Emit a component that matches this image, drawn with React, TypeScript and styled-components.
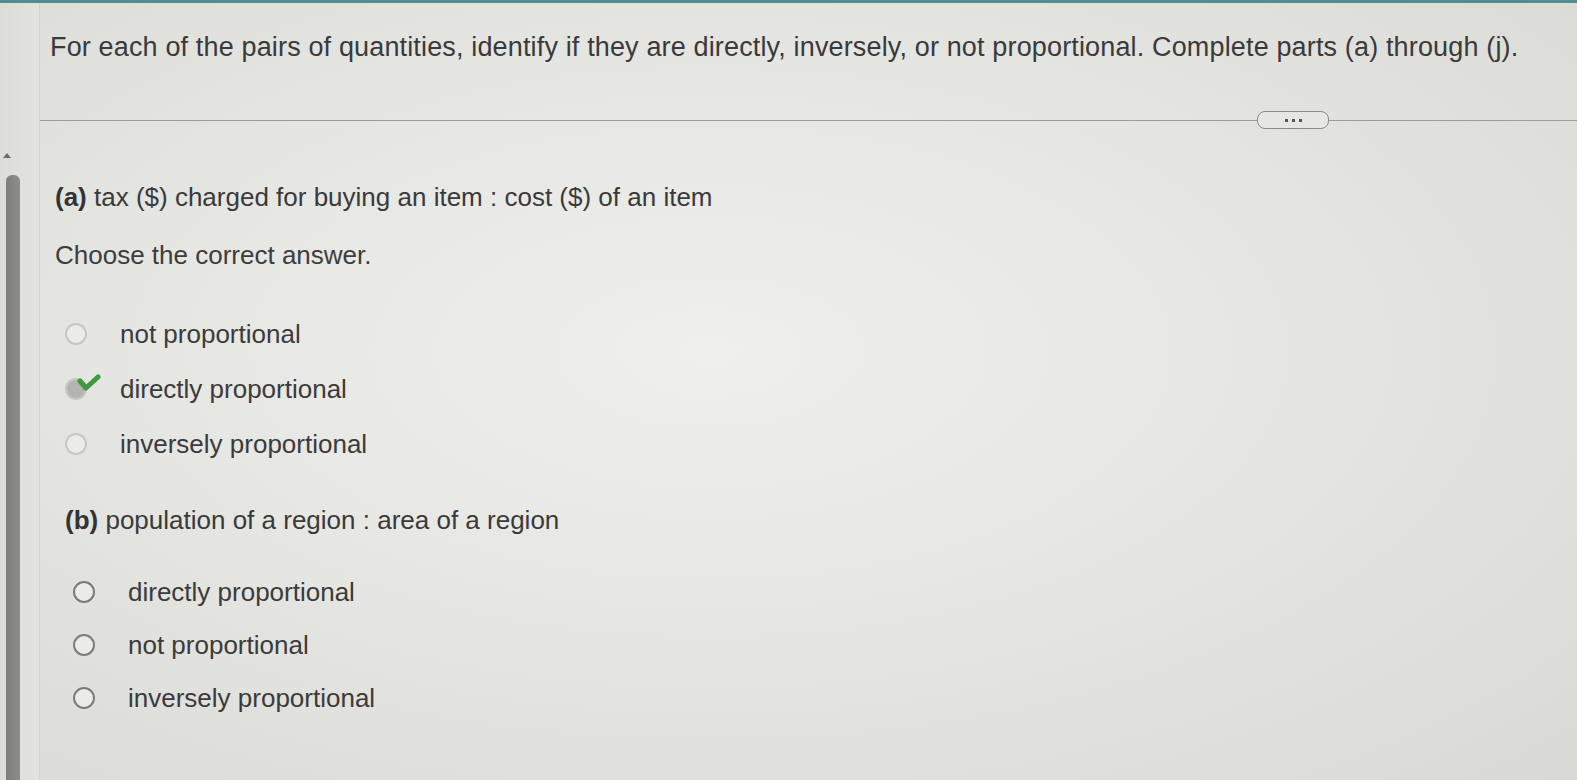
import React from 'react';
import styled, { createGlobalStyle } from 'styled-components';

const GlobalStyle = createGlobalStyle`
  html, body {
    margin: 0;
    padding: 0;
    height: 100%;
  }
  body {
    font-family: 'Liberation Sans', Arial, sans-serif;
    color: #3b3b3b;
    overflow: hidden;
  }
`;

const Page = styled.div`
  position: relative;
  display: flex;
  width: 100vw;
  height: 100vh;
  background: radial-gradient(ellipse at 45% 45%, #efefed 0%, #e6e6e3 45%, #d9d9d5 100%);
  border-top: 3px solid #4f8f93;
  box-sizing: border-box;
`;

const Gutter = styled.div`
  position: relative;
  width: 40px;
  flex-shrink: 0;
  border-right: 1px solid #d2d2cf;
  box-sizing: border-box;
  background: linear-gradient(90deg, #dcdcd8, #e2e2df);
`;

const ScrollArrow = styled.div`
  position: absolute;
  top: 150px;
  left: 3px;
  width: 0;
  height: 0;
  border-left: 4px solid transparent;
  border-right: 4px solid transparent;
  border-bottom: 5px solid #6d6d6d;
`;

const ScrollThumb = styled.div`
  position: absolute;
  top: 172px;
  bottom: 0;
  left: 6px;
  width: 14px;
  border-radius: 6px 6px 0 0;
  background: linear-gradient(90deg, #7e7e7a, #8d8d89);
`;

const Main = styled.div`
  flex: 1;
  display: flex;
  flex-direction: column;
  min-width: 0;
`;

const Heading = styled.div`
  font-size: 27px;
  padding: 28px 0 0 10px;
  line-height: 32px;
  letter-spacing: 0.15px;
  white-space: nowrap;
  color: #3a3a3a;
`;

const DividerRow = styled.div`
  display: flex;
  align-items: center;
  margin-top: 48px;
`;

const Line = styled.div<{ $grow?: boolean }>`
  height: 1px;
  background: #9c9c98;
  flex: ${({ $grow }) => ($grow ? '1' : '0 0 1217px')};
`;

const MorePill = styled.div`
  display: flex;
  align-items: center;
  justify-content: center;
  gap: 4px;
  flex: 0 0 72px;
  height: 18px;
  border: 1.5px solid #8a8a86;
  border-radius: 8px;
  box-sizing: border-box;
  background: #e6e6e3;
`;

const Dot = styled.span`
  width: 3px;
  height: 3px;
  background: #55555a;
`;

const Section = styled.div<{ $indent: number; $top: number }>`
  display: flex;
  flex-direction: column;
  padding-left: ${({ $indent }) => $indent}px;
  margin-top: ${({ $top }) => $top}px;
`;

const Prompt = styled.div`
  font-size: 26px;
  line-height: 30px;
  white-space: nowrap;
  color: #3a3a3a;
`;

const Label = styled.b`
  font-weight: bold;
  color: #333;
`;

const Instruction = styled.div`
  font-size: 26px;
  line-height: 30px;
  margin-top: 28px;
  color: #3d3d3d;
`;

const Options = styled.div<{ $top: number; $gap: number }>`
  display: flex;
  flex-direction: column;
  gap: ${({ $gap }) => $gap}px;
  margin-top: ${({ $top }) => $top}px;
`;

const Option = styled.div`
  display: flex;
  align-items: center;
  height: 30px;
  font-size: 26px;
  color: #3b3b3b;
`;

const RadioWrap = styled.div<{ $offset: number }>`
  position: relative;
  width: 22px;
  height: 22px;
  margin-left: ${({ $offset }) => $offset}px;
  flex-shrink: 0;
`;

const Radio = styled.div<{ $dark?: boolean; $checked?: boolean }>`
  width: 22px;
  height: 22px;
  border-radius: 50%;
  box-sizing: border-box;
  border: 2px solid ${({ $dark }) => ($dark ? '#7b7b7b' : '#c6c6c2')};
  background: ${({ $checked }) => ($checked ? '#b4b4b0' : '#ebebe8')};
`;

const Check = styled.svg`
  position: absolute;
  left: 12px;
  top: -4px;
  width: 24px;
  height: 20px;
`;

const OptionText = styled.span`
  margin-left: 33px;
`;

type Opt = { text: string; checked?: boolean };

const QuestionOptions: React.FC<{ items: Opt[]; dark?: boolean; top: number; gap: number; offset: number }> = ({
  items,
  dark,
  top,
  gap,
  offset,
}) => (
  <Options $top={top} $gap={gap}>
    {items.map((o) => (
      <Option key={o.text}>
        <RadioWrap $offset={offset}>
          <Radio $dark={dark} $checked={o.checked} />
          {o.checked && (
            <Check viewBox="0 0 24 20">
              <path d="M3 7 L9 14 L21 3" fill="none" stroke="#3f9a3f" strokeWidth="5" strokeLinecap="round" strokeLinejoin="round" />
            </Check>
          )}
        </RadioWrap>
        <OptionText>{o.text}</OptionText>
      </Option>
    ))}
  </Options>
);

export default function App() {
  return (
    <>
      <GlobalStyle />
      <Page>
        <Gutter>
          <ScrollArrow />
          <ScrollThumb />
        </Gutter>
        <Main>
          <Heading>
            For each of the pairs of quantities, identify if they are directly, inversely, or not proportional. Complete parts (a) through (j).
          </Heading>
          <DividerRow>
            <Line />
            <MorePill>
              <Dot />
              <Dot />
              <Dot />
            </MorePill>
            <Line $grow />
          </DividerRow>

          <Section $indent={15} $top={53}>
            <Prompt>
              <Label>(a)</Label> tax ($) charged for buying an item : cost ($) of an item
            </Prompt>
            <Instruction>Choose the correct answer.</Instruction>
            <QuestionOptions
              top={49}
              gap={25}
              offset={10}
              items={[
                { text: 'not proportional' },
                { text: 'directly proportional', checked: true },
                { text: 'inversely proportional' },
              ]}
            />
          </Section>

          <Section $indent={25} $top={46}>
            <Prompt>
              <Label>(b)</Label> population of a region : area of a region
            </Prompt>
            <QuestionOptions
              dark
              top={42}
              gap={23}
              offset={8}
              items={[
                { text: 'directly proportional' },
                { text: 'not proportional' },
                { text: 'inversely proportional' },
              ]}
            />
          </Section>
        </Main>
      </Page>
    </>
  );
}
